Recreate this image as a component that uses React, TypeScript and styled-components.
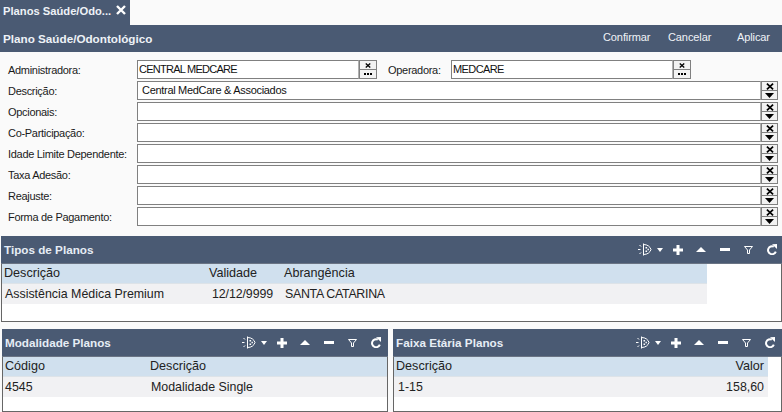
import React from 'react';
import styled, { createGlobalStyle } from 'styled-components';

const NAVY = '#4a5a73';
const Global = createGlobalStyle`
  html, body { margin: 0; padding: 0; background: #fafafa; overflow: hidden; }
  #root { width: 782px; height: 412px; }
`;
const Page = styled.div`
  width: 782px; height: 412px; overflow: hidden; background: #fafafa;
  display: flex; flex-direction: column;
  font-family: "Liberation Sans", Arial, sans-serif; color: #111;
`;
const Tab = styled.div`
  width: 130px; height: 25px; background: ${NAVY}; color: #eef2f7;
  display: flex; justify-content: space-between; padding: 3px 3px 0 3px; box-sizing: border-box;
  font-size: 11.2px; font-weight: bold; line-height: 17px;
`;
const TabClose = styled.svg`margin-top: 2px; margin-right: 1px; display: block;`;
const TitleBar = styled.div`
  height: 27px; background: ${NAVY}; color: #eef2f7; display: flex; align-items: center;
  padding-left: 3px; font-size: 11.7px; font-weight: bold;
`;
const Title = styled.div`flex: 1;`;
const Action = styled.div<{ $w: number }>`
  width: ${p => p.$w}px; font-size: 11px; font-weight: normal; color: #f0f3f7; letter-spacing: -0.1px; margin-top: -4px;
`;
const Form = styled.div`
  display: flex; flex-direction: column; gap: 2px; padding: 8px 0 0 8px; height: 184px; box-sizing: border-box;
`;
const Row = styled.div`display: flex; height: 19px; align-items: center; font-size: 11px;`;
const Label = styled.div<{ $w: number }>`
  width: ${p => p.$w}px; flex: none; color: #1a1a1a; padding-top: 1px; letter-spacing: -0.3px; white-space: nowrap;
`;
const Input = styled.div<{ $w: number; $pad?: number; $track?: number }>`
  width: ${p => p.$w}px; height: 19px; box-sizing: border-box; flex: none; background: #fff;
  border: 1px solid #808080; border-right-color: #b0b0b0; padding-left: ${p => p.$pad ?? 1}px;
  font-size: 11px; line-height: 16px; color: #111; white-space: nowrap; overflow: hidden;
  letter-spacing: ${p => p.$track ?? -0.3}px;
`;
const BtnStack = styled.div<{ $w: number }>`
  width: ${p => p.$w}px; height: 19px; flex: none; display: flex; flex-direction: column; box-sizing: border-box;
  border: 1px solid #808080; background: #f2f2f2;
`;
const BtnCell = styled.div`
  flex: 1; display: flex; align-items: center; justify-content: center;
  & + & { border-top: 1px solid #808080; }
`;
const Sep = styled.div<{ $w: number }>`width: ${p => p.$w}px; flex: none;`;

const XMark = ({ s = 7 }: { s?: number }) => (
  <svg width={s} height={s - 1} viewBox="0 0 7 6"><path d="M0.8 0.5L6.2 5.5M6.2 0.5L0.8 5.5" stroke="#000" strokeWidth="1.5" fill="none" /></svg>
);
const Dots = () => (
  <svg width="8" height="2" viewBox="0 0 8 2"><path d="M0 0h2v2H0zM3 0h2v2H3zM6 0h2v2H6z" fill="#000" /></svg>
);
const Down = () => (
  <svg width="9" height="5" viewBox="0 0 9 5"><path d="M0 0h9L4.5 5z" fill="#000" /></svg>
);
const PickButtons = () => (
  <BtnStack $w={18}><BtnCell><XMark s={6} /></BtnCell><BtnCell><Dots /></BtnCell></BtnStack>
);
const ComboButtons = () => (
  <BtnStack $w={17}><BtnCell><XMark s={8} /></BtnCell><BtnCell><Down /></BtnCell></BtnStack>
);
const FullRow = ({ label, value, pad }: { label: string; value?: string; pad?: number }) => (
  <Row>
    <Label $w={129}>{label}</Label>
    <Input $w={624} $pad={pad}>{value}</Input>
    <ComboButtons />
  </Row>
);

const Panel = styled.div<{ $w: number; $h: number; $ml?: number }>`
  width: ${p => p.$w}px; height: ${p => p.$h}px; box-sizing: border-box; flex: none; margin-left: ${p => p.$ml ?? 0}px;
  background: #fff; border-left: 1px solid #666; border-right: 1px solid #666; border-bottom: 1px solid #666;
  display: flex; flex-direction: column;
`;
const PanelHead = styled.div<{ $pr: number }>`
  height: 27px; flex: none; margin: 0 -1px; background: ${NAVY}; border-bottom: 1px solid #6a7484; box-sizing: content-box;
  display: flex; align-items: center; padding: 0 ${p => p.$pr}px 0 3px; color: #e6edf5;
  font-size: 11.7px; font-weight: bold;
`;
const PanelName = styled.div`flex: 1;`;
const Tools = styled.div`display: flex; align-items: center;`;
const Tool = styled.svg<{ $gap: number }>`margin-left: ${p => p.$gap}px; display: block; flex: none;`;

const Toolbar = () => (
  <Tools>
    <Tool $gap={0} width="14" height="13" viewBox="0 0 14 13" fill="none" stroke="#fff" strokeWidth="1">
      <path d="M0 6.5h2.5M1.5 2l1.5 1.5M1.5 11L3 9.5" />
      <path d="M5.5 0.5v12" />
      <path d="M5.5 1.5C9.5 1.5 12 3.5 13 6.5C12 9.5 9.5 11.5 5.5 11.5" />
      <path d="M7.5 4h1.6v1.6H7.5zM9.5 5.8h1.4v1.4H9.5zM7.5 7.5h1.6v1.6H7.5z" fill="#fff" stroke="none" />
    </Tool>
    <Tool $gap={5} width="6" height="4" viewBox="0 0 6 4"><path d="M0 0h6L3 4z" fill="#fff" /></Tool>
    <Tool $gap={10} width="10" height="10" viewBox="0 0 10 10"><path d="M3.5 0h3v3.5H10v3H6.5V10h-3V6.5H0v-3h3.5z" fill="#fff" /></Tool>
    <Tool $gap={13} width="10" height="5" viewBox="0 0 10 5"><path d="M5 0l5 5H0z" fill="#fff" /></Tool>
    <Tool $gap={14} width="10" height="3" viewBox="0 0 10 3"><path d="M0 0h10v3H0z" fill="#fff" /></Tool>
    <Tool $gap={14} width="9" height="8" viewBox="0 0 9 8" fill="none" stroke="#fff" strokeWidth="1"><path d="M0.5 0.5h8L5.5 4v3.5h-2V4z" /></Tool>
    <Tool $gap={14} width="10" height="11" viewBox="0 0 10 11" fill="none">
      <path d="M6.8 2.6A4 4 0 1 0 8.8 7.6" stroke="#fff" strokeWidth="2" />
      <path d="M5 0.3L10 0V5z" fill="#fff" />
    </Tool>
  </Tools>
);

const Grid = styled.div<{ $cols: string; $w: string }>`
  display: grid; grid-template-columns: ${p => p.$cols}; width: ${p => p.$w}; flex: none;
  font-size: 12.6px; color: #222;
`;
const HeadCell = styled.div<{ $right?: boolean }>`
  height: 20px; background: #d0e0ee; line-height: 18px; padding: 0 ${p => (p.$right ? 4 : 2)}px 0 2px; white-space: nowrap; box-sizing: border-box;
  border-bottom: 1px solid #dde3e8; text-align: ${p => (p.$right ? 'right' : 'left')};
`;
const BodyCell = styled.div<{ $right?: boolean; $pl?: number; $track?: number }>`
  height: 20px; background: #f1f1f3; line-height: 20px; padding: 0 ${p => (p.$right ? 4 : 2)}px 0 ${p => p.$pl ?? 3}px; white-space: nowrap; box-sizing: border-box;
  font-size: 12.4px; letter-spacing: ${p => p.$track ?? 0}px;
  text-align: ${p => (p.$right ? 'right' : 'left')};
`;
const Lower = styled.div`display: flex; margin-top: 7px;`;

export default function App() {
  return (
    <Page>
      <Global />
      <Tab>
        <span>Planos Saúde/Odo...</span>
        <TabClose width="10" height="10" viewBox="0 0 10 10"><path d="M1 1l8 8M9 1l-8 8" stroke="#fff" strokeWidth="2.4" /></TabClose>
      </Tab>
      <TitleBar>
        <Title>Plano Saúde/Odontológico</Title>
        <Action $w={65}>Confirmar</Action>
        <Action $w={69}>Cancelar</Action>
        <Action $w={45}>Aplicar</Action>
      </TitleBar>
      <Form>
        <Row>
          <Label $w={129}>Administradora:</Label>
          <Input $w={222} $track={-0.75}>CENTRAL MEDCARE</Input>
          <PickButtons />
          <Sep $w={11} />
          <Label $w={63}>Operadora:</Label>
          <Input $w={222} $track={-0.6}>MEDCARE</Input>
          <PickButtons />
        </Row>
        <FullRow label="Descrição:" value="Central MedCare & Associados" pad={4} />
        <FullRow label="Opcionais:" />
        <FullRow label="Co-Participação:" />
        <FullRow label="Idade Limite Dependente:" />
        <FullRow label="Taxa Adesão:" />
        <FullRow label="Reajuste:" />
        <FullRow label="Forma de Pagamento:" />
      </Form>
      <Panel $w={781} $h={86} $ml={1}>
        <PanelHead $pr={5}><PanelName>Tipos de Planos</PanelName><Toolbar /></PanelHead>
        <Grid $cols="205px 75px 425px" $w="705px">
          <HeadCell>Descrição</HeadCell><HeadCell>Validade</HeadCell><HeadCell>Abrangência</HeadCell>
          <BodyCell>Assistência Médica Premium</BodyCell><BodyCell $pl={5} $track={-0.1}>12/12/9999</BodyCell><BodyCell $pl={3} $track={-0.3}>SANTA CATARINA</BodyCell>
        </Grid>
      </Panel>
      <Lower>
        <Panel $w={386} $h={83} $ml={2}>
          <PanelHead $pr={7}><PanelName>Modalidade Planos</PanelName><Toolbar /></PanelHead>
          <Grid $cols="145px 239px" $w="384px">
            <HeadCell>Código</HeadCell><HeadCell>Descrição</HeadCell>
            <BodyCell $pl={2}>4545</BodyCell><BodyCell>Modalidade Single</BodyCell>
          </Grid>
        </Panel>
        <Panel $w={389} $h={83} $ml={5}>
          <PanelHead $pr={7}><PanelName>Faixa Etária Planos</PanelName><Toolbar /></PanelHead>
          <Grid $cols="284px 90px" $w="374px">
            <HeadCell>Descrição</HeadCell><HeadCell $right>Valor</HeadCell>
            <BodyCell $pl={4}>1-15</BodyCell><BodyCell $right>158,60</BodyCell>
          </Grid>
        </Panel>
      </Lower>
    </Page>
  );
}
